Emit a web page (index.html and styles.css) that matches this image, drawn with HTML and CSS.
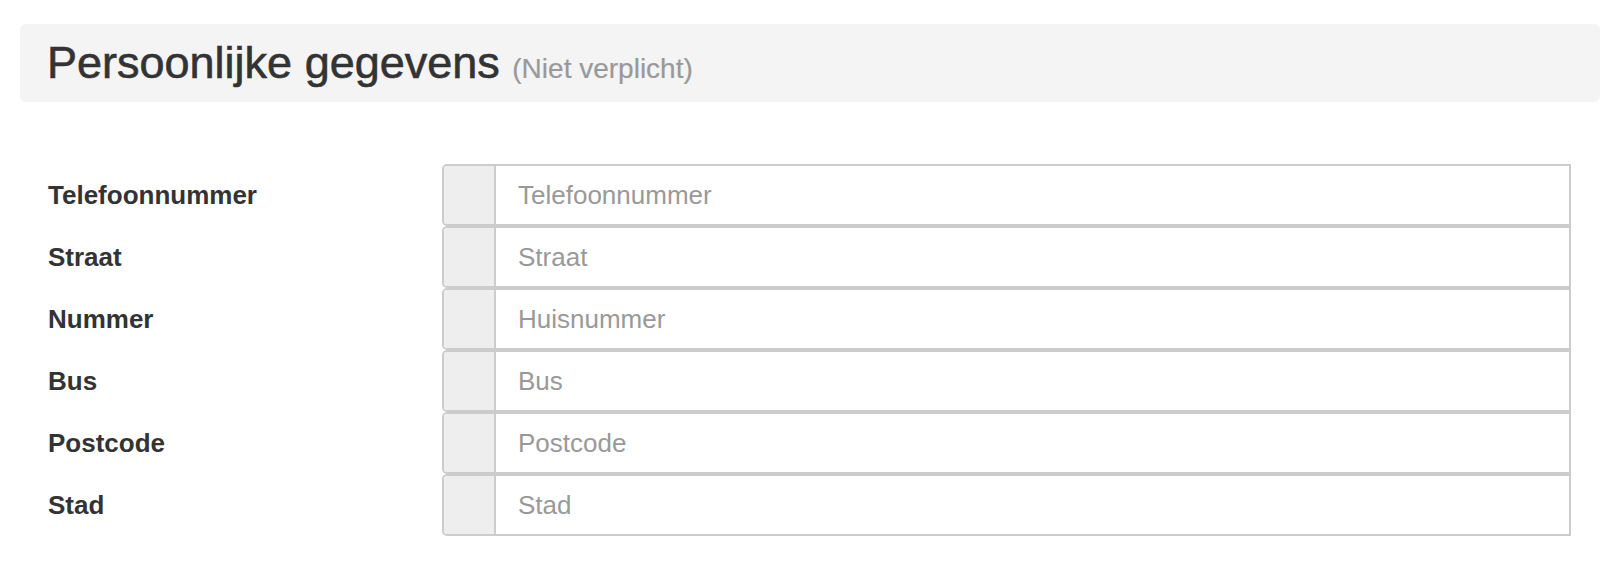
FILE: index.html
```html
<!DOCTYPE html>
<html lang="nl">
<head>
<meta charset="utf-8">
<title>Persoonlijke gegevens</title>
<link rel="stylesheet" href="styles.css">
</head>
<body>
<div class="page">
  <div class="section-head">
    <h1 class="title">Persoonlijke gegevens <small class="hint">(Niet verplicht)</small></h1>
  </div>
  <form class="form">
    <div class="row">
      <label class="label" for="tel">Telefoonnummer</label>
      <div class="group"><span class="addon"></span><input class="field" id="tel" type="text" placeholder="Telefoonnummer"></div>
    </div>
    <div class="row">
      <label class="label" for="straat">Straat</label>
      <div class="group"><span class="addon"></span><input class="field" id="straat" type="text" placeholder="Straat"></div>
    </div>
    <div class="row">
      <label class="label" for="nummer">Nummer</label>
      <div class="group"><span class="addon"></span><input class="field" id="nummer" type="text" placeholder="Huisnummer"></div>
    </div>
    <div class="row">
      <label class="label" for="bus">Bus</label>
      <div class="group"><span class="addon"></span><input class="field" id="bus" type="text" placeholder="Bus"></div>
    </div>
    <div class="row">
      <label class="label" for="postcode">Postcode</label>
      <div class="group"><span class="addon"></span><input class="field" id="postcode" type="text" placeholder="Postcode"></div>
    </div>
    <div class="row">
      <label class="label" for="stad">Stad</label>
      <div class="group"><span class="addon"></span><input class="field" id="stad" type="text" placeholder="Stad"></div>
    </div>
  </form>
</div>
</body>
</html>
```
FILE: styles.css
```css
* { box-sizing: border-box; }
html, body {
  margin: 0;
  padding: 0;
  background: #ffffff;
  font-family: "Liberation Sans", Arial, sans-serif;
  color: #333333;
}
.page {
  padding: 24px 10px 0 20px;
}
.section-head {
  height: 78px;
  background: #f4f4f4;
  border-radius: 6px;
  padding: 0 27px;
  display: flex;
  align-items: center;
}
.title {
  margin: 0;
  font-size: 45px;
  font-weight: normal;
  line-height: normal;
  color: #333333;
  white-space: nowrap;
  -webkit-text-stroke: 0.6px #333333;
}
.hint {
  font-size: 28px;
  color: #999999;
  -webkit-text-stroke: 0.2px #999999;
}
.form {
  margin: 62px 29px 0 0;
  display: flex;
  flex-direction: column;
}
.row {
  display: flex;
  align-items: center;
  height: 62px;
}
.label {
  width: 422px;
  padding-left: 28px;
  font-size: 26px;
  font-weight: bold;
  color: #333333;
}
.group {
  flex: 1;
  display: flex;
  height: 62px;
  border: 2px solid #cccccc;
  border-radius: 5px 0 0 5px;
  overflow: hidden;
  background: #ffffff;
}
.addon {
  width: 52px;
  flex: none;
  background: #eeeeee;
  border-right: 2px solid #cccccc;
}
.field {
  flex: 1;
  border: 0;
  outline: none;
  background: #ffffff;
  padding: 0 22px;
  font-family: "Liberation Sans", Arial, sans-serif;
  font-size: 26px;
  color: #555555;
  min-width: 0;
}
.field::placeholder {
  color: #999999;
  opacity: 1;
}
```
